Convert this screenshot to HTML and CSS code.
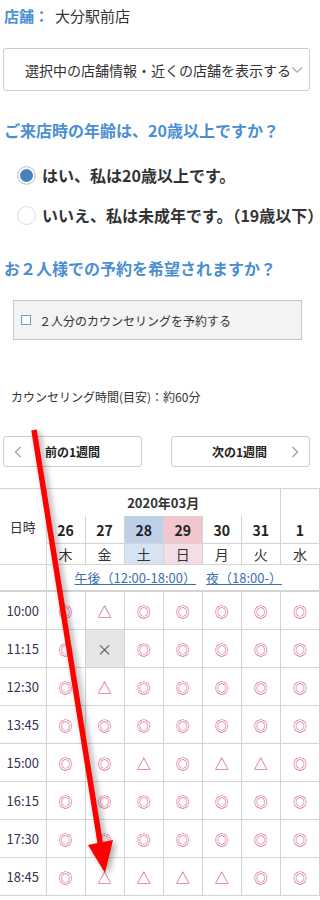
FILE: index.html
```html
<!DOCTYPE html>
<html lang="ja">
<head>
    <meta charset="UTF-8">
    <meta name="viewport" content="width=device-width, initial-scale=1.0">
    <title>予約</title>
    <link rel="stylesheet" href="styles.css">
</head>
<body>
    <div class="page">
        <p class="shop"><span class="shop-label">店舗：</span>大分駅前店</p>

        <div class="shop-select">
            <span>選択中の店舗情報・近くの店舗を表示する</span>
            <svg class="chevron-down" width="12" height="8" viewBox="0 0 12 8"><path d="M1 1.5 L6 6 L11 1.5" fill="none" stroke="#b4b4b4" stroke-width="1.6"/></svg>
        </div>

        <h2 class="question q-age">ご来店時の年齢は、20歳以上ですか？</h2>
        <label class="radio radio-first"><span class="radio-mark checked"></span>はい、私は20歳以上です。</label>
        <label class="radio"><span class="radio-mark"></span>いいえ、私は未成年です。（19歳以下）</label>

        <h2 class="question q-pair">お２人様での予約を希望されますか？</h2>
        <label class="pair-box"><span class="check-mark"></span>２人分のカウンセリングを予約する</label>

        <p class="duration">カウンセリング時間(目安)：約60分</p>

        <div class="week-nav">
            <button class="week-btn prev">
                <svg width="8" height="12" viewBox="0 0 8 12"><path d="M6.5 1 L1.5 6 L6.5 11" fill="none" stroke="#aaa" stroke-width="1.6"/></svg>
                <span>前の1週間</span>
            </button>
            <button class="week-btn next">
                <span>次の1週間</span>
                <svg width="8" height="12" viewBox="0 0 8 12"><path d="M1.5 1 L6.5 6 L1.5 11" fill="none" stroke="#aaa" stroke-width="1.6"/></svg>
            </button>
        </div>
    </div>

    <table class="calendar">
        <colgroup>
            <col class="col-time">
            <col><col><col><col><col><col><col>
        </colgroup>
        <tr class="row-month">
            <th rowspan="3" class="head-time">日時</th>
            <th colspan="6" class="month">2020年03月</th>
            <th class="month-next"></th>
        </tr>
        <tr class="row-date">
            <th>26</th><th>27</th><th class="sat">28</th><th class="sun">29</th><th>30</th><th>31</th><th>1</th>
        </tr>
        <tr class="row-day">
            <th>木</th><th>金</th><th class="sat">土</th><th class="sun">日</th><th>月</th><th>火</th><th>水</th>
        </tr>
        <tr class="row-links">
            <td></td>
            <td colspan="7"><a href="#">午後（12:00-18:00）</a><a href="#">夜（18:00-）</a></td>
        </tr>
        <tr><td class="time">10:00</td><td class="ok">◎</td><td class="few">△</td><td class="ok">◎</td><td class="ok">◎</td><td class="ok">◎</td><td class="ok">◎</td><td class="ok">◎</td></tr>
        <tr><td class="time">11:15</td><td class="ok">◎</td><td class="full">×</td><td class="ok">◎</td><td class="ok">◎</td><td class="ok">◎</td><td class="ok">◎</td><td class="ok">◎</td></tr>
        <tr><td class="time">12:30</td><td class="ok">◎</td><td class="few">△</td><td class="ok">◎</td><td class="ok">◎</td><td class="ok">◎</td><td class="ok">◎</td><td class="ok">◎</td></tr>
        <tr><td class="time">13:45</td><td class="ok">◎</td><td class="ok">◎</td><td class="ok">◎</td><td class="ok">◎</td><td class="ok">◎</td><td class="ok">◎</td><td class="ok">◎</td></tr>
        <tr><td class="time">15:00</td><td class="ok">◎</td><td class="ok">◎</td><td class="few">△</td><td class="ok">◎</td><td class="few">△</td><td class="few">△</td><td class="ok">◎</td></tr>
        <tr><td class="time">16:15</td><td class="ok">◎</td><td class="ok">◎</td><td class="ok">◎</td><td class="ok">◎</td><td class="ok">◎</td><td class="ok">◎</td><td class="ok">◎</td></tr>
        <tr><td class="time">17:30</td><td class="ok">◎</td><td class="ok">◎</td><td class="ok">◎</td><td class="ok">◎</td><td class="ok">◎</td><td class="ok">◎</td><td class="ok">◎</td></tr>
        <tr><td class="time">18:45</td><td class="ok">◎</td><td class="few">△</td><td class="few">△</td><td class="few">△</td><td class="few">△</td><td class="ok">◎</td><td class="ok">◎</td></tr>
    </table>

    <!-- annotation arrow drawn over the screenshot -->
    <svg class="annotation" width="320" height="900" viewBox="0 0 320 900">
        <g class="arrow">
            <line x1="34" y1="430" x2="100.5" y2="845" stroke="#ff0000" stroke-width="5.5"/>
            <polygon points="88,845 113,840 105,873" fill="#ff0000"/>
        </g>
    </svg>
</body>
</html>
```

FILE: styles.css
```css
/* Base */
body {
    margin: 0;
    font-family: "Noto Sans CJK JP", "Noto Sans", sans-serif;
    color: #333;
    background: #fff;
    position: relative;
    width: 320px;
    overflow: hidden;
}

.page {
    padding: 0 10px 0 3px;
}

/* Shop line */
.shop {
    margin: 6px 0 0 1px;
    font-size: 15px;
    line-height: 20px;
}

.shop-label {
    color: #4a8fd2;
    font-weight: bold;
    margin-right: 6px;
}

.shop-select {
    margin-top: 22px;
    height: 43px;
    box-sizing: border-box;
    border: 1px solid #ccc;
    border-radius: 3px;
    display: flex;
    align-items: center;
    padding-left: 21px;
    font-size: 14px;
    white-space: nowrap;
    overflow: hidden;
}

.chevron-down {
    flex: none;
}

/* Questions */
.question {
    margin: 29px 0 0 1px;
    font-size: 16px;
    line-height: 20px;
    color: #4a8fd2;
    font-weight: bold;
    white-space: nowrap;
}

.q-pair {
    margin-top: 31px;
}

.radio {
    display: flex;
    align-items: center;
    height: 24px;
    margin-top: 16px;
    font-size: 16px;
    font-weight: bold;
    color: #333;
    white-space: nowrap;
}

.radio-first {
    margin-top: 23px;
}

.radio-mark {
    flex: none;
    width: 19px;
    height: 19px;
    box-sizing: border-box;
    border: 1px solid #dcdcdc;
    border-radius: 50%;
    margin: 0 6px 0 14px;
    background: #fff;
}

.radio-mark.checked {
    background: #4a7fbd;
    box-shadow: inset 0 0 0 2px #fff;
    border-color: #d6d6d6;
}

.pair-box {
    display: flex;
    align-items: center;
    margin: 22px 8px 0 10px;
    height: 40px;
    box-sizing: border-box;
    border: 1px solid #c8c8c8;
    background: #f3f3f3;
    font-size: 12px;
    padding-left: 7px;
}

.check-mark {
    width: 8px;
    height: 8px;
    border: 1px solid #6a9bd3;
    background: #fff;
    margin-right: 8px;
}

.duration {
    margin: 48px 0 0 8px;
    font-size: 12px;
    line-height: 18px;
}

/* Week navigation */
.week-nav {
    display: flex;
    justify-content: space-between;
    margin-top: 30px;
}

.week-btn {
    width: 139px;
    height: 31px;
    background: #fff;
    border: 1px solid #ccc;
    border-radius: 3px;
    font-family: inherit;
    font-size: 12px;
    font-weight: bold;
    color: #222;
    display: flex;
    align-items: center;
    padding: 0 10px;
}

.week-btn.prev span {
    margin-left: 23px;
}

.week-btn.next {
    justify-content: flex-end;
}

.week-btn.next span {
    margin-right: 24px;
}

/* Calendar table */
.calendar {
    margin-top: 21px;
    width: 320px;
    border-collapse: collapse;
    table-layout: fixed;
    font-size: 14px;
    line-height: 16px;
}

.col-time {
    width: 46px;
}

.calendar th,
.calendar td {
    border: 1px solid #d4d4d4;
    text-align: center;
    padding: 0;
}

.calendar tr > :first-child {
    border-left: none;
}

.head-time {
    font-size: 13px;
    font-weight: normal;
    color: #333;
}

.row-month th {
    height: 27px;
    border-bottom: none;
}

.month {
    font-size: 13px;
    font-weight: bold;
}

.row-date th {
    height: 27px;
    border-top: none;
    font-weight: bold;
    font-size: 14px;
    color: #222;
}

.row-day th {
    height: 20px;
    font-weight: normal;
    font-size: 14px;
}

.row-date .sat { background: #bdd0e8; }
.row-date .sun { background: #f0c7cf; }
.row-day .sat { background: #d6e3f2; }
.row-day .sun { background: #f5dde5; }

.row-links td {
    height: 25px;
    border-bottom: 2px solid #d4d4d4;
    font-size: 13px;
    text-align: left;
}

.row-links a {
    color: #3b6fb0;
    text-decoration: underline;
    margin-left: 28px;
}

.row-links a + a {
    margin-left: 10px;
}

.calendar td {
    height: 37px;
}

.calendar .row-links td {
    height: 25px;
}

.time {
    font-size: 13px;
    color: #3c3054;
}

.ok,
.few {
    color: #d23d6b;
    font-size: 14px;
}

.full {
    background: #e5e5e5;
    color: #555;
    font-size: 15px;
}

/* Annotation overlay */
.annotation {
    position: absolute;
    top: 0;
    left: 0;
    pointer-events: none;
}

.arrow {
    filter: drop-shadow(3px 2px 3px rgba(0, 0, 0, 0.35));
}
```
